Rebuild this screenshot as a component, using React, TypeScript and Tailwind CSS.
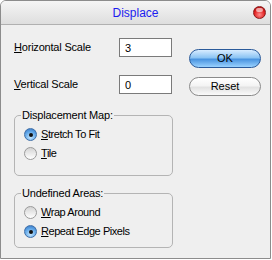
import React, { useState } from 'react';

const font = { fontFamily: '"Liberation Sans", Arial, sans-serif' };

function Ul({ text }: { text: string }) {
  return (
    <>
      <span className="underline underline-offset-[1px]">{text[0]}</span>
      {text.slice(1)}
    </>
  );
}

function Radio({ checked, label, onClick }: { checked: boolean; label: string; onClick: () => void }) {
  return (
    <div className="flex items-center gap-[4px] h-[13px] cursor-default" onClick={onClick}>
      <div
        className={`w-[13px] h-[13px] rounded-full border flex items-center justify-center ${
          checked
            ? 'border-[#3f6fa8] bg-[radial-gradient(circle_at_50%_75%,#c4e6ff_0%,#62a8e8_55%,#2f6fc0_100%)]'
            : 'border-[#9a9a9a] bg-[linear-gradient(to_bottom,#d4d4d4,#ffffff)]'
        }`}
      >
        {checked && <div className="w-[4px] h-[4px] rounded-full bg-[#111]" />}
      </div>
      <span className="text-[11px] tracking-[-0.45px] text-black leading-none">
        <Ul text={label} />
      </span>
    </div>
  );
}

function Group({ title, className, children }: { title: string; className: string; children: React.ReactNode }) {
  return (
    <div className={`relative border border-[#b4b4b4] rounded-[5px] ${className}`}>
      <span className="absolute -top-[8px] left-[6px] bg-[#efefef] px-[1px] text-[11px] tracking-[-0.2px] text-black leading-[14px]">
        {title}
      </span>
      {children}
    </div>
  );
}

export default function App() {
  const [map, setMap] = useState('stretch');
  const [area, setArea] = useState('repeat');
  const [h, setH] = useState('3');
  const [v, setV] = useState('0');

  return (
    <div className="w-[272px] h-[260px] bg-white" style={font}>
      <div className="w-[271px] h-[259px] border border-[#8c8c8c] rounded-t-[6px] overflow-hidden flex flex-col">
        <div className="relative h-[24px] shrink-0 border-b border-[#b0b0b0] bg-[linear-gradient(to_bottom,#f5f5f5,#dedede)] flex items-center justify-center">
          <span className="text-[12px] text-[#1c1cf0]">Displace</span>
          <div className="absolute right-[4px] top-[5px] w-[13px] h-[13px] rounded-full border border-[#8a1c1c] bg-[radial-gradient(circle_at_50%_70%,#ff8a8a_0%,#e02020_55%,#a00808_100%)]">
            <div className="mx-auto mt-[1px] w-[7px] h-[4px] rounded-full bg-white/60" />
          </div>
        </div>
        <div className="flex-1 bg-[#efefef] flex pl-[13px] pt-[13px]">
          <div className="w-[159px] flex flex-col">
            <div className="flex items-center h-[19px] pr-[1px]">
              <span className="text-[11px] tracking-[-0.2px] text-black">
                <Ul text="Horizontal Scale" />
              </span>
              <input
                value={h}
                onChange={(e) => setH(e.target.value)}
                className="ml-auto w-[53px] h-[19px] border border-[#7a7a7a] bg-white px-[5px] text-[11px] text-black outline-none"
              />
            </div>
            <div className="flex items-center h-[19px] pr-[1px] mt-[18px]">
              <span className="text-[11px] tracking-[-0.2px] text-black">
                <Ul text="Vertical Scale" />
              </span>
              <input
                value={v}
                onChange={(e) => setV(e.target.value)}
                className="ml-auto w-[53px] h-[19px] border border-[#7a7a7a] bg-white px-[5px] text-[11px] text-black outline-none"
              />
            </div>
            <Group title="Displacement Map:" className="mt-[21px] h-[61px] pl-[9px] pt-[12px] flex flex-col gap-[6px]">
              <Radio checked={map === 'stretch'} label="Stretch To Fit" onClick={() => setMap('stretch')} />
              <Radio checked={map === 'tile'} label="Tile" onClick={() => setMap('tile')} />
            </Group>
            <Group title="Undefined Areas:" className="mt-[17px] h-[55px] pl-[9px] pt-[12px] flex flex-col gap-[6px]">
              <Radio checked={area === 'wrap'} label="Wrap Around" onClick={() => setArea('wrap')} />
              <Radio checked={area === 'repeat'} label="Repeat Edge Pixels" onClick={() => setArea('repeat')} />
            </Group>
          </div>
          <div className="ml-[16px] pt-[11px] flex flex-col gap-[9px]">
            <button className="w-[72px] h-[19px] rounded-full border border-[#2a5a9a] bg-[linear-gradient(to_bottom,#d8ecff_0%,#8cc4f4_45%,#4a94e0_55%,#9ad2ff_100%)] text-[11px] text-black leading-none">
              OK
            </button>
            <button className="w-[72px] h-[19px] rounded-full border border-[#8a8a8a] bg-[linear-gradient(to_bottom,#ffffff_0%,#f4f4f4_45%,#e2e2e2_55%,#fafafa_100%)] text-[11px] text-black leading-none">
              Reset
            </button>
          </div>
        </div>
      </div>
    </div>
  );
}
